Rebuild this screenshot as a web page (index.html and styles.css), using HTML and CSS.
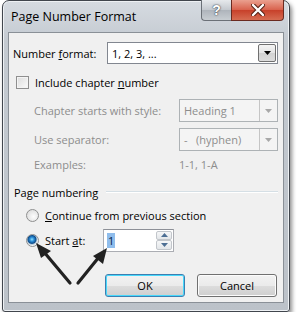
FILE: index.html
```html
<!DOCTYPE html>
<html lang="en">
<head>
    <meta charset="UTF-8">
    <title>Page Number Format</title>
    <link rel="stylesheet" href="styles.css">
</head>
<body>
    <div class="window">
        <div class="titlebar">
            <span class="title">Page Number Format</span>
            <div class="caption-btns">
                <span class="btn-help">?</span>
                <span class="btn-close">
                    <svg width="14" height="12" viewBox="0 0 14 12">
                        <path d="M2 1 L12 11 M12 1 L2 11" stroke="#5a2418" stroke-width="4.4" stroke-linecap="round"/>
                        <path d="M2 1 L12 11 M12 1 L2 11" stroke="#fff" stroke-width="2.4" stroke-linecap="round"/>
                    </svg>
                </span>
            </div>
        </div>
        <div class="client">
            <div class="row row-format">
                <span class="main-label">Number <u>f</u>ormat:</span>
                <div class="select select-wide">
                    <span class="select-text">1, 2, 3, ...</span>
                    <span class="drop"><svg width="7" height="4" viewBox="0 0 7 4"><path d="M0 0 H7 L3.5 4 Z" fill="#000"/></svg></span>
                </div>
            </div>
            <div class="row row-check">
                <span class="checkbox"></span>
                <span>Include chapter <u>n</u>umber</span>
            </div>
            <div class="row row-sub row-style">
                <span class="sub-label">Chapter starts with style:</span>
                <div class="select select-narrow disabled">
                    <span class="select-text">Heading 1</span>
                    <span class="drop"><svg width="7" height="4" viewBox="0 0 7 4"><path d="M0 0 H7 L3.5 4 Z" fill="#a8a8a8"/></svg></span>
                </div>
            </div>
            <div class="row row-sub row-sep">
                <span class="sub-label">Use separator:</span>
                <div class="select select-narrow disabled">
                    <span class="select-text">-&nbsp;&nbsp;&nbsp;(hyphen)</span>
                    <span class="drop"><svg width="7" height="4" viewBox="0 0 7 4"><path d="M0 0 H7 L3.5 4 Z" fill="#a8a8a8"/></svg></span>
                </div>
            </div>
            <div class="row row-sub row-examples">
                <span class="sub-label">Examples:</span>
                <span class="example-value">1-1, 1-A</span>
            </div>
            <div class="group-head">
                <span>Page numbering</span>
                <span class="rule"></span>
            </div>
            <div class="row row-radio row-continue">
                <span class="radio"></span>
                <span><u>C</u>ontinue from previous section</span>
            </div>
            <div class="row row-radio row-start">
                <span class="radio checked"></span>
                <span class="start-label">Start <u>a</u>t:</span>
                <div class="spin">
                    <span class="spin-text"><span class="sel">1</span></span>
                    <span class="spin-btns">
                        <span class="spin-btn"><svg width="7" height="4" viewBox="0 0 7 4"><path d="M0 4 H7 L3.5 0 Z" fill="#4d6f94"/></svg></span>
                        <span class="spin-btn"><svg width="7" height="4" viewBox="0 0 7 4"><path d="M0 0 H7 L3.5 4 Z" fill="#4d6f94"/></svg></span>
                    </span>
                </div>
            </div>
            <div class="buttons">
                <button class="btn btn-ok">OK</button>
                <button class="btn">Cancel</button>
            </div>
        </div>
        <!-- callout arrows drawn over the dialog -->
        <svg class="arrows" width="288" height="312" viewBox="0 0 288 312">
            <g stroke="#222" stroke-width="3.2" stroke-linecap="round" fill="#222">
                <line x1="68" y1="283" x2="42" y2="252"/>
                <line x1="76" y1="283" x2="97" y2="257"/>
            </g>
            <path d="M34 243 L49 251 L39 258 Z" fill="#222"/>
            <path d="M105 248 L101 264 L91 256 Z" fill="#222"/>
        </svg>
    </div>
</body>
</html>
```

FILE: styles.css
```css
body {
    margin: 0;
    background: #fff;
    font-family: "Open Sans", "Liberation Sans", sans-serif;
    font-size: 11px;
    color: #000;
}
u {
    text-decoration: underline;
    text-underline-offset: 1px;
}
.window {
    position: relative;
    width: 288px;
    height: 312px;
    margin-left: 2px;
    box-sizing: border-box;
    padding: 0 5px 8px 5px;
    border: 1px solid #41464d;
    border-radius: 7px 7px 3px 3px;
    background: linear-gradient(#d6dbe1, #c4cad1 40px, #bcc2c9);
    box-shadow: 2px 3px 4px rgba(0, 0, 0, 0.45), inset 0 0 0 1px #eef1f4;
}
.titlebar {
    height: 31px;
    display: flex;
    justify-content: space-between;
    align-items: flex-start;
}
.title {
    margin: 7px 0 0 3px;
    font-size: 12.5px;
    color: #000;
}
.caption-btns {
    display: flex;
    margin-right: 0;
    margin-top: -1px;
}
.btn-help,
.btn-close {
    height: 20px;
    display: flex;
    align-items: center;
    justify-content: center;
    border: 1px solid #6b7077;
    border-top: none;
}
.btn-help {
    width: 29px;
    border-radius: 0 0 0 4px;
    border-right: none;
    background: linear-gradient(#e6e9ec, #c3c8ce 50%, #aeb4bb 51%, #c8cdd2);
    color: #fff;
    font-family: "Liberation Sans", sans-serif;
    font-weight: bold;
    font-size: 14px;
    text-shadow: 0 0 2px #3b4048, 0 0 1px #3b4048;
}
.btn-close {
    width: 51px;
    border-radius: 0 0 4px 0;
    border-color: #6a2a20;
    background: linear-gradient(#eaa08f, #d8614c 50%, #c7402a 51%, #d66c52);
}
.client {
    height: 271px;
    box-sizing: border-box;
    border: 1px solid #8a9097;
    background: #f0f0f0;
    padding-left: 4px;
}
.row {
    display: flex;
    align-items: center;
}
.row-format {
    margin-top: 9px;
    height: 22px;
}
.main-label {
    width: 94px;
}
.select {
    display: flex;
    box-sizing: border-box;
    height: 22px;
    border: 1px solid #828790;
    background: #fff;
}
.select-wide {
    width: 171px;
}
.select-narrow {
    width: 99px;
    height: 23px;
}
.select-text {
    flex: 1;
    padding-left: 4px;
    display: flex;
    align-items: center;
}
.drop {
    width: 18px;
    display: flex;
    align-items: center;
    justify-content: center;
    box-sizing: border-box;
    margin: 1px;
    border: 1px solid #707070;
    border-radius: 2px;
    background: linear-gradient(#f4f4f4, #e4e4e4 50%, #d2d2d2 51%, #dcdcdc);
}
.select.disabled {
    border-color: #adb2b5;
    background: #f4f4f4;
    color: #8d8d8d;
}
.select.disabled .drop {
    margin: 0;
    border: none;
    border-left: 1px solid #c5c5c5;
    border-radius: 0;
    background: #f4f4f4;
}
.row-check {
    margin-top: 10px;
    height: 16px;
    padding-left: 3px;
}
.checkbox {
    width: 11px;
    height: 11px;
    margin-right: 6px;
    border: 1px solid #8f8f8f;
    background: linear-gradient(135deg, #dcdcdc, #fbfbfb);
    box-shadow: inset 0 0 0 1px #f4f4f4;
}
.row-sub {
    padding-left: 21px;
    color: #8d8d8d;
}
.sub-label {
    width: 145px;
}
.row-style {
    margin-top: 9px;
    height: 23px;
}
.row-sep {
    margin-top: 6px;
    height: 23px;
}
.row-examples {
    margin-top: 3px;
    height: 20px;
}
.group-head {
    display: flex;
    align-items: center;
    height: 16px;
    margin-top: 10px;
    padding-left: 1px;
}
.rule {
    flex: none;
    width: 172px;
    height: 1px;
    margin-left: 8px;
    background: #d5dfe5;
    border-bottom: 1px solid #fff;
}
.row-radio {
    padding-left: 13px;
}
.row-continue {
    margin-top: 6px;
    height: 18px;
}
.row-start {
    margin-top: 4px;
    height: 24px;
}
.radio {
    width: 11px;
    height: 11px;
    margin-right: 6px;
    border-radius: 50%;
    border: 1px solid #8e8f8f;
    background: radial-gradient(circle at 60% 60%, #fdfdfd, #d5d5d5);
}
.radio.checked {
    background: radial-gradient(circle at 45% 40%, #8fe3ff 0, #2d8fd8 2px, #0d4d8c 4px, #b7c9d9 5px, #f1f4f6 6px);
}
.start-label {
    width: 58px;
}
.spin {
    display: flex;
    width: 71px;
    height: 23px;
    box-sizing: border-box;
    border: 1px solid #abadb3;
    border-top-color: #8d9097;
    background: #fff;
}
.spin-text {
    flex: 1;
    display: flex;
    align-items: center;
    padding-left: 3px;
}
.sel {
    background: #8fbdec;
    color: #0b2446;
    padding: 0 1px;
    line-height: 15px;
}
.spin-btns {
    display: flex;
    flex-direction: column;
    width: 16px;
    margin: 1px;
}
.spin-btn {
    flex: 1;
    display: flex;
    align-items: center;
    justify-content: center;
    border: 1px solid #c2c6cb;
    border-radius: 2px;
    background: linear-gradient(#f6f7f8, #e3e6e9);
}
.buttons {
    display: flex;
    margin-top: 22px;
    padding-left: 92px;
    gap: 12px;
}
.btn {
    width: 80px;
    height: 23px;
    padding: 0;
    font-family: "Open Sans", "Liberation Sans", sans-serif;
    font-size: 11px;
    color: #000;
    border: 1px solid #707070;
    border-radius: 3px;
    background: linear-gradient(#f2f2f2, #ebebeb 50%, #dddddd 51%, #cfcfcf);
    box-shadow: inset 0 0 0 1px #fcfcfc;
}
.btn-ok {
    border-color: #3c7fb1;
    box-shadow: inset 0 0 0 1px #48d8fb;
}
.arrows {
    position: absolute;
    left: -1px;
    top: -1px;
    pointer-events: none;
}
```
